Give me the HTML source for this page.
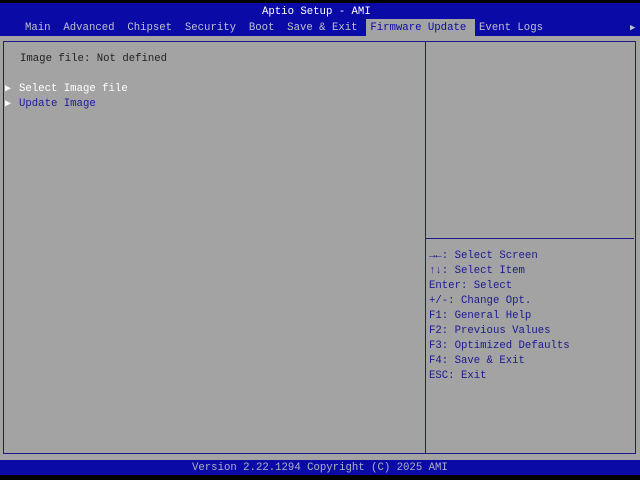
<!DOCTYPE html>
<html><head><style>
*{margin:0;padding:0;box-sizing:border-box}
body{width:640px;height:480px;background:#000;position:relative;overflow:hidden;font-family:"Liberation Mono","DejaVu Sans Mono",monospace;font-size:10.67px;line-height:15px}
.abs{position:absolute;white-space:pre}
#hdr{position:absolute;left:0;top:3px;width:640px;height:33px;background:#0a0aa6}
#body{position:absolute;left:0;top:36px;width:640px;height:424px;background:#a3a3a3}
#ftr{position:absolute;left:0;top:460px;width:640px;height:15px;background:#0a0aa6}
.box{position:absolute;border:1px solid #1a1a8a}
</style></head><body>
<div id="hdr"></div>
<div id="body"></div>
<div id="ftr"></div>
<div class="abs" style="left:262px;top:5px;color:#fff">Aptio Setup - AMI</div>
<div class="abs" style="left:366px;top:19px;width:109px;height:17px;background:#a3a3a3;white-space:normal"></div>
<div class="abs" style="left:25px;top:21px;color:#c0c0d0">Main  Advanced  Chipset  Security  Boot  Save &amp; Exit  <span style="color:#0a0aa6">Firmware Update</span>  Event Logs</div>
<div class="abs" style="left:630px;top:21px;color:#c0c0d0;font-size:9px">&#9654;</div>
<div class="box" style="left:3px;top:41px;width:423px;height:413px"></div>
<div class="box" style="left:425px;top:41px;width:211px;height:413px"></div>
<div class="abs" style="left:426px;top:238px;width:208px;height:1px;background:#1a1a8a"></div>
<div class="abs" style="left:20px;top:52px;color:#222">Image file: Not defined</div>
<div class="abs" style="left:5px;top:82px;color:#fff;font-size:10px">&#9654;</div>
<div class="abs" style="left:19px;top:82px;color:#fff">Select Image file</div>
<div class="abs" style="left:5px;top:97px;color:#fff;font-size:10px">&#9654;</div>
<div class="abs" style="left:19px;top:97px;color:#1a1aa0">Update Image</div>
<div class="abs" style="left:429px;top:249px;color:#1a1a90">→←: Select Screen
↑↓: Select Item
Enter: Select
+/-: Change Opt.
F1: General Help
F2: Previous Values
F3: Optimized Defaults
F4: Save &amp; Exit
ESC: Exit</div>
<div class="abs" style="left:192px;top:461px;color:#b0b0c8">Version 2.22.1294 Copyright (C) 2025 AMI</div>
</body></html>
